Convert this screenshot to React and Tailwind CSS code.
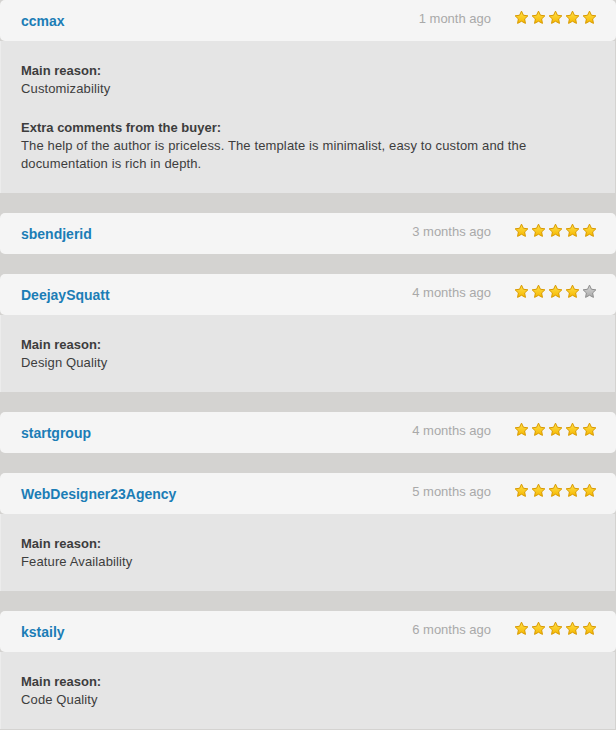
import React from "react";

const reviews = [
  {
    name: "ccmax",
    time: "1 month ago",
    stars: 5,
    sections: [
      { title: "Main reason:", text: "Customizability" },
      {
        title: "Extra comments from the buyer:",
        text: "The help of the author is priceless. The template is minimalist, easy to custom and the documentation is rich in depth.",
      },
    ],
  },
  { name: "sbendjerid", time: "3 months ago", stars: 5, sections: [] },
  {
    name: "DeejaySquatt",
    time: "4 months ago",
    stars: 4,
    sections: [{ title: "Main reason:", text: "Design Quality" }],
  },
  { name: "startgroup", time: "4 months ago", stars: 5, sections: [] },
  {
    name: "WebDesigner23Agency",
    time: "5 months ago",
    stars: 5,
    sections: [{ title: "Main reason:", text: "Feature Availability" }],
  },
  {
    name: "kstaily",
    time: "6 months ago",
    stars: 5,
    sections: [{ title: "Main reason:", text: "Code Quality" }],
  },
];

function Star({ on }) {
  return (
    <svg width="15" height="15" viewBox="0 0 24 24" className="block">
      <defs>
        <linearGradient id={on ? "gOn" : "gOff"} x1="0" y1="0" x2="0" y2="1">
          <stop offset="0" stopColor={on ? "#ffe04a" : "#d6d6d6"} />
          <stop offset="1" stopColor={on ? "#f6b800" : "#a9a9a9"} />
        </linearGradient>
      </defs>
      <path
        d="M12 1.8l3.1 6.6 7.1.9-5.2 5 1.3 7.1L12 18l-6.3 3.4 1.3-7.1-5.2-5 7.1-.9z"
        fill={`url(#${on ? "gOn" : "gOff"})`}
        stroke={on ? "#d99a00" : "#8e8e8e"}
        strokeWidth="1.6"
        strokeLinejoin="round"
      />
    </svg>
  );
}

function Review({ r }) {
  return (
    <div className="flex flex-col">
      <div className="flex h-[41px] items-center rounded-[5px] bg-[#f5f5f5] pl-[21px] pr-[19px]">
        <div className="mt-[2px] flex-1 text-[14px] font-bold text-[#1b7db6]">{r.name}</div>
        <div className="mb-[3px] text-[13px] text-[#a9a9a9]">{r.time}</div>
        <div className="mb-[7px] ml-[23px] flex gap-[2px]">
          {[0, 1, 2, 3, 4].map((i) => (
            <Star key={i} on={i < r.stars} />
          ))}
        </div>
      </div>
      {r.sections.length > 0 && (
        <div className="mr-[1px] flex flex-col gap-[21px] border-l border-[#ececec] bg-[#e5e5e5] pb-[20px] pl-[20px] pr-[60px] pt-[21px] text-[13px] leading-[18px] tracking-[0.13px] text-[#3d3d3d]">
          {r.sections.map((s, i) => (
            <div key={i}>
              <div className="font-bold tracking-normal">{s.title}</div>
              <div>{s.text}</div>
            </div>
          ))}
        </div>
      )}
    </div>
  );
}

export default function App() {
  return (
    <div
      className="flex min-h-[730px] w-[616px] flex-col gap-[20px] bg-[#d4d3d1]"
      style={{ fontFamily: '"Liberation Sans", Arial, sans-serif' }}
    >
      {reviews.map((r, i) => (
        <Review key={i} r={r} />
      ))}
    </div>
  );
}
